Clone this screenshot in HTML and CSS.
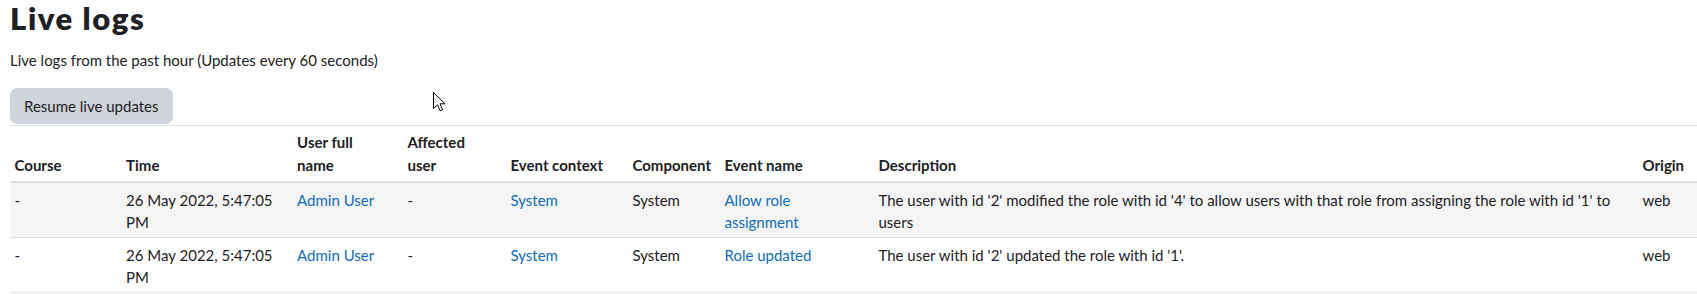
FILE: index.html
```html
<!DOCTYPE html>
<html lang="en">

<head>
    <meta charset="UTF-8">
    <meta name="viewport" content="width=device-width, initial-scale=1.0">
    <title>Live logs</title>
    <link rel="stylesheet" href="styles.css">
</head>

<body>
    <div class="page">
        <h2>Live logs</h2>
        <p class="intro">Live logs from the past hour (Updates every 60 seconds)</p>
        <div class="actions">
            <button class="btn">Resume live updates</button>
        </div>

        <table class="logs">
            <colgroup>
                <col class="c-course">
                <col class="c-time">
                <col class="c-user">
                <col class="c-affected">
                <col class="c-context">
                <col class="c-component">
                <col class="c-event">
                <col class="c-desc">
                <col class="c-origin">
            </colgroup>
            <thead>
                <tr>
                    <th>Course</th>
                    <th>Time</th>
                    <th>User full name</th>
                    <th>Affected user</th>
                    <th>Event context</th>
                    <th>Component</th>
                    <th>Event name</th>
                    <th>Description</th>
                    <th>Origin</th>
                </tr>
            </thead>
            <tbody>
                <tr>
                    <td>-</td>
                    <td>26 May 2022, 5:47:05 PM</td>
                    <td><a href="#">Admin User</a></td>
                    <td>-</td>
                    <td><a href="#">System</a></td>
                    <td>System</td>
                    <td><a href="#">Allow role assignment</a></td>
                    <td>The user with id '2' modified the role with id '4' to allow users with that role from assigning the role with id '1' to users</td>
                    <td>web</td>
                </tr>
                <tr>
                    <td>-</td>
                    <td>26 May 2022, 5:47:05 PM</td>
                    <td><a href="#">Admin User</a></td>
                    <td>-</td>
                    <td><a href="#">System</a></td>
                    <td>System</td>
                    <td><a href="#">Role updated</a></td>
                    <td>The user with id '2' updated the role with id '1'.</td>
                    <td>web</td>
                </tr>
            </tbody>
        </table>
    </div>

    <!-- mouse pointer over the page -->
    <svg class="cursor" width="13" height="20" viewBox="0 0 13 20">
        <path d="M0.5 0.5 L0.5 16.5 L4.5 12.8 L7.2 18.8 L9.6 17.8 L7 11.8 L12 11.8 Z" fill="#fff" stroke="#000" stroke-width="1" stroke-linejoin="miter" />
    </svg>
</body>

</html>
```
FILE: styles.css
```css
* {
    box-sizing: border-box;
}

body {
    margin: 0;
    font-family: Lato, "Liberation Sans", sans-serif;
    font-size: 15px;
    line-height: 22.5px;
    color: #1d2125;
    background: #fff;
}

.page {
    padding-left: 10px;
}

h2 {
    margin: 0 0 13px;
    font-size: 31px;
    line-height: 36px;
    font-weight: 800;
    letter-spacing: 1.6px;
}

.intro {
    margin: 0 0 16.5px;
}

.actions {
    display: flex;
}

.btn {
    font-family: inherit;
    font-size: 15px;
    line-height: 22.5px;
    color: #1d2125;
    background-color: #ced4da;
    border: 1px solid #ced4da;
    border-radius: 7px;
    padding: 6px 13px 5.5px;
}

.logs {
    width: 100%;
    margin-top: 1px;
    table-layout: fixed;
    border-collapse: collapse;
    border-top: 1px solid #dee2e6;
}

.c-course { width: 111.6px; }
.c-time { width: 171px; }
.c-user { width: 110.4px; }
.c-affected { width: 103px; }
.c-context { width: 122px; }
.c-component { width: 92px; }
.c-event { width: 154px; }
.c-desc { width: 764px; }
.c-origin { width: 59px; }

.logs th,
.logs td {
    text-align: left;
    vertical-align: top;
    padding: 5.5px 12px 3.5px 4.5px;
}

.logs th {
    vertical-align: bottom;
    font-weight: 700;
    padding-top: 5px;
    padding-bottom: 5px;
    border-bottom: 2px solid #dee2e6;
}

.logs td {
    border-bottom: 1px solid #dee2e6;
}

.logs th:last-child,
.logs td:last-child {
    padding-right: 0;
}

.logs tbody tr:nth-child(odd) {
    background-color: #f5f5f5;
}

.logs a {
    color: #0f6cbf;
    text-decoration: none;
}

.cursor {
    position: absolute;
    left: 433px;
    top: 92px;
}
```
